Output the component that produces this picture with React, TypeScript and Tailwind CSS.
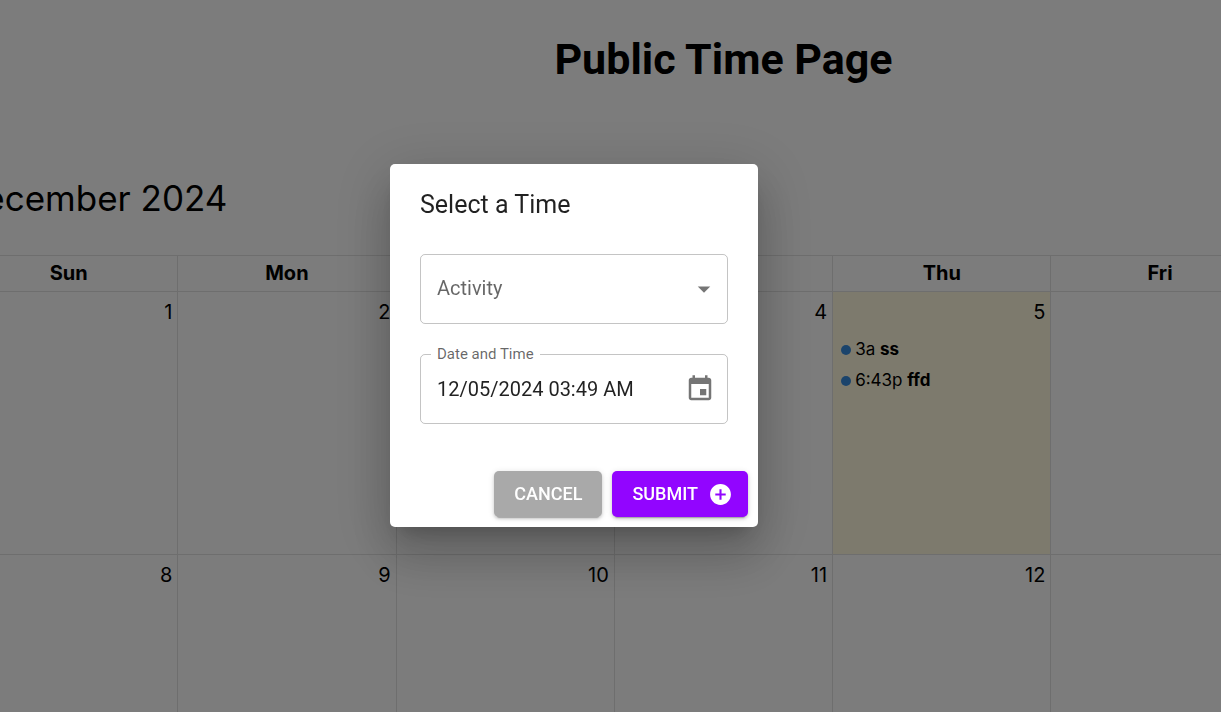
import { useState } from "react";

type CalendarEvent = { time: string; title: string };
type Day = { day: number; today?: boolean; events?: CalendarEvent[] };

const weekdays = ["Sun", "Mon", "Tue", "Wed", "Thu", "Fri", "Sat"];

const weeks: Day[][] = [
  [
    { day: 1 },
    { day: 2 },
    { day: 3 },
    { day: 4 },
    {
      day: 5,
      today: true,
      events: [
        { time: "3a", title: "ss" },
        { time: "6:43p", title: "ffd" },
      ],
    },
    { day: 6 },
    { day: 7 },
  ],
  [{ day: 8 }, { day: 9 }, { day: 10 }, { day: 11 }, { day: 12 }, { day: 13 }, { day: 14 }],
];

function DayCell({ day, today, events = [] }: Day) {
  return (
    <td className={`h-[263px] border border-[#ddd] p-0 align-top ${today ? "bg-[#ffdc28]/15" : ""}`}>
      <div className="px-[5px] pt-[5px] text-right text-[20px] leading-[30px]">{day}</div>
      <ul className="flex flex-col gap-[6px] px-2 pt-[10px]">
        {events.map((event) => (
          <li key={event.title} className="flex items-center gap-1 text-[17px] leading-[25px]">
            <span className="size-[10px] rounded-full bg-[#3788d8]" />
            <span>
              {event.time} <b className="font-bold">{event.title}</b>
            </span>
          </li>
        ))}
      </ul>
    </td>
  );
}

function Calendar() {
  return (
    <section className="font-[Inter,sans-serif] text-black">
      <h2 className="text-[35px] leading-[44px]">December 2024</h2>
      <table className="mt-[35px] w-full table-fixed border-collapse">
        <thead>
          <tr>
            {weekdays.map((name) => (
              <th key={name} className="h-9 border border-[#ddd] p-0 pb-[2px] align-middle text-[20px] leading-[30px] font-bold">
                {name}
              </th>
            ))}
          </tr>
        </thead>
        <tbody>
          {weeks.map((week) => (
            <tr key={week[0].day}>
              {week.map((d) => (
                <DayCell key={d.day} {...d} />
              ))}
            </tr>
          ))}
        </tbody>
      </table>
    </section>
  );
}

function TimeDialog() {
  const [activity, setActivity] = useState("");
  const [date, setDate] = useState("12/05/2024 03:49 AM");
  return (
    <form
      role="dialog"
      aria-labelledby="dialog-title"
      onSubmit={(e) => e.preventDefault()}
      className="w-full max-w-[368px] rounded-[5px] bg-white text-black/87 shadow-[0_14px_19px_-9px_rgba(0,0,0,0.2),0_30px_48px_4px_rgba(0,0,0,0.14),0_11px_58px_10px_rgba(0,0,0,0.12)]"
    >
      <h2 id="dialog-title" className="px-[30px] pt-[21px] pb-[19px] text-[25px] leading-[40px]">
        Select a Time
      </h2>
      <div className="flex flex-col gap-[30px] px-[30px] pt-[10px] pb-[47px]">
        <div className="relative">
          <select
            aria-label="Activity"
            value={activity}
            onChange={(e) => setActivity(e.target.value)}
            className="block h-[70px] w-full appearance-none rounded-[5px] border border-black/23 bg-transparent px-4 pb-[2px] text-[20px] text-black/60"
          >
            <option value="">Activity</option>
          </select>
          <svg viewBox="0 0 24 24" className="pointer-events-none absolute top-5 right-[9px] size-[30px] fill-black/54">
            <path d="M7 10l5 5 5-5z" />
          </svg>
        </div>
        <div className="relative flex h-[70px] items-center rounded-[5px] border border-black/23 pr-3 pl-4">
          <label htmlFor="date" className="absolute -top-[11px] left-[10px] bg-white px-[6px] text-[15px] leading-[20px] text-black/60">
            Date and Time
          </label>
          <input
            id="date"
            type="text"
            value={date}
            onChange={(e) => setDate(e.target.value)}
            className="min-w-0 flex-1 bg-transparent text-[20px] leading-[28px] outline-none"
          />
          <button type="button" aria-label="Choose date">
            <svg viewBox="0 0 24 24" className="size-[30px] fill-black/54">
              <path d="M17 12h-5v5h5v-5zM16 1v2H8V1H6v2H5c-1.11 0-1.99.9-1.99 2L3 19c0 1.1.89 2 2 2h14c1.1 0 2-.9 2-2V5c0-1.1-.9-2-2-2h-1V1h-2zm3 18H5V8h14v11z" />
            </svg>
          </button>
        </div>
      </div>
      <div className="flex justify-end gap-[10px] px-[10px] pb-[10px]">
        <button
          type="button"
          className="h-[46px] rounded-[5px] bg-[#a9a9a9] px-5 pb-[2px] text-[18px] font-medium text-white shadow-[0_4px_1px_-3px_rgba(0,0,0,0.2),0_2px_3px_0_rgba(0,0,0,0.14),0_1px_6px_0_rgba(0,0,0,0.12)]"
        >
          CANCEL
        </button>
        <button
          type="submit"
          className="flex h-[46px] items-center gap-[10px] rounded-[5px] bg-[#9205ff] pr-[15px] pl-5 text-[18px] font-medium text-white shadow-[0_4px_1px_-3px_rgba(0,0,0,0.2),0_2px_3px_0_rgba(0,0,0,0.14),0_1px_6px_0_rgba(0,0,0,0.12)]"
        >
          <span className="pb-[2px]">SUBMIT</span>
          <svg viewBox="0 0 24 24" className="size-[25px] fill-white">
            <path d="M12 2C6.48 2 2 6.48 2 12s4.48 10 10 10 10-4.48 10-10S17.52 2 12 2zm5 11h-4v4h-2v-4H7v-2h4V7h2v4h4v2z" />
          </svg>
        </button>
      </div>
    </form>
  );
}

export default function App() {
  return (
    <div className="h-screen overflow-hidden bg-[#f9f9f9] font-[Roboto,sans-serif]">
      <main className="-ml-[41px] w-[calc(100%+308px)]">
        <h1 className="pt-[33px] pb-[91px] text-center text-[43px] leading-[52px] font-bold text-black">Public Time Page</h1>
        <Calendar />
      </main>
      <div className="fixed inset-0 flex items-center justify-center bg-black/50 pr-[73px] pb-[21px]">
        <TimeDialog />
      </div>
    </div>
  );
}
